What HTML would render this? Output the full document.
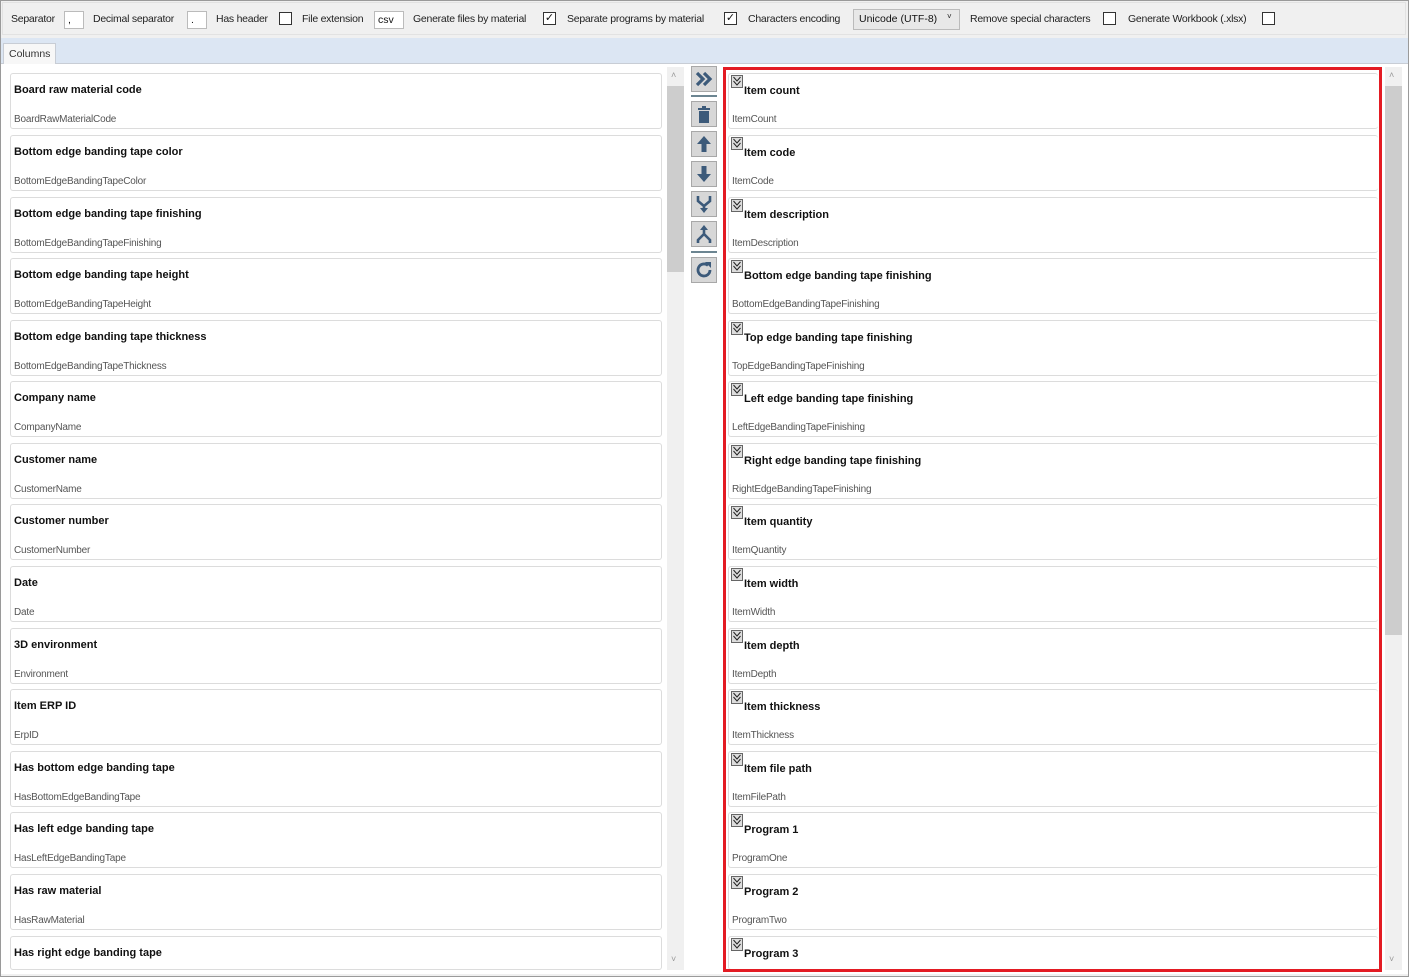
<!DOCTYPE html>
<html><head><meta charset="utf-8"><style>
*{box-sizing:border-box;margin:0;padding:0}
body{width:1409px;height:977px;overflow:hidden;background:#f0f0f0;font-family:"Liberation Sans",sans-serif;font-size:11px;color:#111;position:relative}
.a{position:absolute}
.frame{left:0;top:0;width:1409px;height:977px;border:1px solid #9a9a9a}
.tb{left:2px;top:2px;width:1404px;height:33px;background:#f0f0f0;border:1px solid #e2e2e2}
.tb span{position:absolute;top:10px;font-size:10.5px;letter-spacing:-0.25px;color:#222;white-space:nowrap}
.inp{position:absolute;top:8px;height:18px;background:#fff;border:1px solid #bbb;font-size:10.5px;padding:2px 3px}
.cb{position:absolute;top:9px;width:13px;height:13px;background:#fff;border:1px solid #333;font-size:11px;line-height:11px;text-align:center}
.tabbar{left:1px;top:38px;width:1407px;height:25px;background:#dce6f3}
.tab{left:3px;top:43px;width:53px;height:21px;background:#f7f7f7;border:1px solid #c8cdd5;border-bottom:none;font-size:10.5px;padding:4px 0 0 5px;color:#333}
.content{left:1px;top:63px;width:1407px;height:911px;background:#fff;border-top:1px solid #c8cdd5}
.it{position:absolute;height:56px;border:1px solid #dcdcdc;border-radius:3px;background:#fff}
.it b{position:absolute;left:3px;top:10px;font-size:11px;font-weight:bold;color:#111;white-space:nowrap}
.it i{position:absolute;left:3px;top:40px;font-style:normal;font-size:10px;color:#555;letter-spacing:-0.2px;white-space:nowrap}
.L{left:10px;width:652px}
.R{left:728px;width:650px;border-right:none}
.R b{left:15px;top:11px}
.ex{position:absolute;left:2px;top:1px;width:12px;height:13px;border:1px solid #666;background:#ddd}
.sb{position:absolute;width:17px;background:#f0f0f0}
.btn{position:absolute;left:691px;width:26px;height:26px;background:#d7d7d7;border:1px solid #a8a8a8}
.sep{position:absolute;left:691px;width:26px;height:2px;background:#6c8591}
.red{left:723px;top:67px;width:659px;height:905px;border:3px solid #e31b23}
</style></head><body>
<div class="a frame"></div>
<div class="a tb">
<span style="left:8px">Separator</span><div class="inp" style="left:61px;width:20px">,</div>
<span style="left:90px">Decimal separator</span><div class="inp" style="left:184px;width:20px">.</div>
<span style="left:213px">Has header</span><div class="cb" style="left:276px"></div>
<span style="left:299px">File extension</span><div class="inp" style="left:371px;width:30px">csv</div>
<span style="left:410px">Generate files by material</span><div class="cb" style="left:540px">✓</div>
<span style="left:564px">Separate programs by material</span><div class="cb" style="left:721px">✓</div>
<span style="left:745px">Characters encoding</span><div class="inp" style="left:850px;width:107px;height:21px;top:6px;background:#e8e8e8;padding:3px 5px">Unicode (UTF-8) <span style="position:absolute;left:93px;top:2px;font-size:8px">˅</span></div>
<span style="left:967px">Remove special characters</span><div class="cb" style="left:1100px"></div>
<span style="left:1125px">Generate Workbook (.xlsx)</span><div class="cb" style="left:1259px"></div>
</div>
<div class="a tabbar"></div>
<div class="a content"></div>
<div class="a tab">Columns</div>

<div class="it L" style="top:73px"><b>Board raw material code</b><i>BoardRawMaterialCode</i></div>
<div class="it L" style="top:135px"><b>Bottom edge banding tape color</b><i>BottomEdgeBandingTapeColor</i></div>
<div class="it L" style="top:197px"><b>Bottom edge banding tape finishing</b><i>BottomEdgeBandingTapeFinishing</i></div>
<div class="it L" style="top:258px"><b>Bottom edge banding tape height</b><i>BottomEdgeBandingTapeHeight</i></div>
<div class="it L" style="top:320px"><b>Bottom edge banding tape thickness</b><i>BottomEdgeBandingTapeThickness</i></div>
<div class="it L" style="top:381px"><b>Company name</b><i>CompanyName</i></div>
<div class="it L" style="top:443px"><b>Customer name</b><i>CustomerName</i></div>
<div class="it L" style="top:504px"><b>Customer number</b><i>CustomerNumber</i></div>
<div class="it L" style="top:566px"><b>Date</b><i>Date</i></div>
<div class="it L" style="top:628px"><b>3D environment</b><i>Environment</i></div>
<div class="it L" style="top:689px"><b>Item ERP ID</b><i>ErpID</i></div>
<div class="it L" style="top:751px"><b>Has bottom edge banding tape</b><i>HasBottomEdgeBandingTape</i></div>
<div class="it L" style="top:812px"><b>Has left edge banding tape</b><i>HasLeftEdgeBandingTape</i></div>
<div class="it L" style="top:874px"><b>Has raw material</b><i>HasRawMaterial</i></div>
<div class="it L" style="top:936px;height:34px"><b>Has right edge banding tape</b></div>

<div class="sb" style="left:667px;top:67px;height:903px"></div>
<div class="sb" style="left:667px;top:86px;height:186px;background:#cdcdcd"></div>
<div class="a" style="left:671px;top:70px;font-size:9px;color:#999">˄</div>
<div class="a" style="left:671px;top:954px;font-size:9px;color:#999">˅</div>

<div class="btn" style="top:66px"><svg width="24" height="24"><path d="M5 6l6 6-6 6M12 6l6 6-6 6" fill="none" stroke="#3c5a7a" stroke-width="3.2"/></svg></div>
<div class="sep" style="top:95px"></div>
<div class="btn" style="top:101px"><svg width="24" height="24"><rect x="6" y="6" width="12" height="2" fill="#3c5a7a"/><rect x="10" y="4" width="4" height="2" fill="#3c5a7a"/><rect x="7" y="9" width="10" height="12" fill="#3c5a7a"/></svg></div>
<div class="btn" style="top:131px"><svg width="24" height="24"><path d="M12 4l-7 8h4.5v8h5v-8H19z" fill="#3c5a7a"/></svg></div>
<div class="btn" style="top:161px"><svg width="24" height="24"><path d="M12 20l-7-8h4.5V4h5v8H19z" fill="#3c5a7a"/></svg></div>
<div class="btn" style="top:191px"><svg width="24" height="24"><path d="M6 4v5l6 5 6-5V4M12 14v4" fill="none" stroke="#3c5a7a" stroke-width="2.6"/><path d="M8 16l4 5 4-5z" fill="#3c5a7a"/></svg></div>
<div class="btn" style="top:221px"><svg width="24" height="24"><path d="M12 7v5l-6 6v3M12 12l6 6v3" fill="none" stroke="#3c5a7a" stroke-width="2.6"/><path d="M8 8l4-5 4 5z" fill="#3c5a7a"/></svg></div>
<div class="sep" style="top:251px"></div>
<div class="btn" style="top:257px"><svg width="24" height="24"><path d="M18 12a6 6 0 1 1-2-4.5" fill="none" stroke="#3c5a7a" stroke-width="2.8"/><path d="M13 4h6v6z" fill="#3c5a7a"/></svg></div>

<div class="it R" style="top:73px"><div class="ex"><svg width="10" height="11"><path d="M1.5 1l3.5 4 3.5-4M1.5 5l3.5 4 3.5-4" fill="none" stroke="#222" stroke-width="1"/></svg></div><b>Item count</b><i>ItemCount</i></div>
<div class="it R" style="top:135px"><div class="ex"><svg width="10" height="11"><path d="M1.5 1l3.5 4 3.5-4M1.5 5l3.5 4 3.5-4" fill="none" stroke="#222" stroke-width="1"/></svg></div><b>Item code</b><i>ItemCode</i></div>
<div class="it R" style="top:197px"><div class="ex"><svg width="10" height="11"><path d="M1.5 1l3.5 4 3.5-4M1.5 5l3.5 4 3.5-4" fill="none" stroke="#222" stroke-width="1"/></svg></div><b>Item description</b><i>ItemDescription</i></div>
<div class="it R" style="top:258px"><div class="ex"><svg width="10" height="11"><path d="M1.5 1l3.5 4 3.5-4M1.5 5l3.5 4 3.5-4" fill="none" stroke="#222" stroke-width="1"/></svg></div><b>Bottom edge banding tape finishing</b><i>BottomEdgeBandingTapeFinishing</i></div>
<div class="it R" style="top:320px"><div class="ex"><svg width="10" height="11"><path d="M1.5 1l3.5 4 3.5-4M1.5 5l3.5 4 3.5-4" fill="none" stroke="#222" stroke-width="1"/></svg></div><b>Top edge banding tape finishing</b><i>TopEdgeBandingTapeFinishing</i></div>
<div class="it R" style="top:381px"><div class="ex"><svg width="10" height="11"><path d="M1.5 1l3.5 4 3.5-4M1.5 5l3.5 4 3.5-4" fill="none" stroke="#222" stroke-width="1"/></svg></div><b>Left edge banding tape finishing</b><i>LeftEdgeBandingTapeFinishing</i></div>
<div class="it R" style="top:443px"><div class="ex"><svg width="10" height="11"><path d="M1.5 1l3.5 4 3.5-4M1.5 5l3.5 4 3.5-4" fill="none" stroke="#222" stroke-width="1"/></svg></div><b>Right edge banding tape finishing</b><i>RightEdgeBandingTapeFinishing</i></div>
<div class="it R" style="top:504px"><div class="ex"><svg width="10" height="11"><path d="M1.5 1l3.5 4 3.5-4M1.5 5l3.5 4 3.5-4" fill="none" stroke="#222" stroke-width="1"/></svg></div><b>Item quantity</b><i>ItemQuantity</i></div>
<div class="it R" style="top:566px"><div class="ex"><svg width="10" height="11"><path d="M1.5 1l3.5 4 3.5-4M1.5 5l3.5 4 3.5-4" fill="none" stroke="#222" stroke-width="1"/></svg></div><b>Item width</b><i>ItemWidth</i></div>
<div class="it R" style="top:628px"><div class="ex"><svg width="10" height="11"><path d="M1.5 1l3.5 4 3.5-4M1.5 5l3.5 4 3.5-4" fill="none" stroke="#222" stroke-width="1"/></svg></div><b>Item depth</b><i>ItemDepth</i></div>
<div class="it R" style="top:689px"><div class="ex"><svg width="10" height="11"><path d="M1.5 1l3.5 4 3.5-4M1.5 5l3.5 4 3.5-4" fill="none" stroke="#222" stroke-width="1"/></svg></div><b>Item thickness</b><i>ItemThickness</i></div>
<div class="it R" style="top:751px"><div class="ex"><svg width="10" height="11"><path d="M1.5 1l3.5 4 3.5-4M1.5 5l3.5 4 3.5-4" fill="none" stroke="#222" stroke-width="1"/></svg></div><b>Item file path</b><i>ItemFilePath</i></div>
<div class="it R" style="top:812px"><div class="ex"><svg width="10" height="11"><path d="M1.5 1l3.5 4 3.5-4M1.5 5l3.5 4 3.5-4" fill="none" stroke="#222" stroke-width="1"/></svg></div><b>Program 1</b><i>ProgramOne</i></div>
<div class="it R" style="top:874px"><div class="ex"><svg width="10" height="11"><path d="M1.5 1l3.5 4 3.5-4M1.5 5l3.5 4 3.5-4" fill="none" stroke="#222" stroke-width="1"/></svg></div><b>Program 2</b><i>ProgramTwo</i></div>
<div class="it R" style="top:936px;height:34px"><div class="ex"><svg width="10" height="11"><path d="M1.5 1l3.5 4 3.5-4M1.5 5l3.5 4 3.5-4" fill="none" stroke="#222" stroke-width="1"/></svg></div><b>Program 3</b></div>
<div class="a red"></div>

<div class="sb" style="left:1385px;top:67px;height:903px"></div>
<div class="sb" style="left:1385px;top:86px;height:549px;background:#cdcdcd"></div>
<div class="a" style="left:1389px;top:70px;font-size:9px;color:#999">˄</div>
<div class="a" style="left:1389px;top:954px;font-size:9px;color:#999">˅</div>
</body></html>
